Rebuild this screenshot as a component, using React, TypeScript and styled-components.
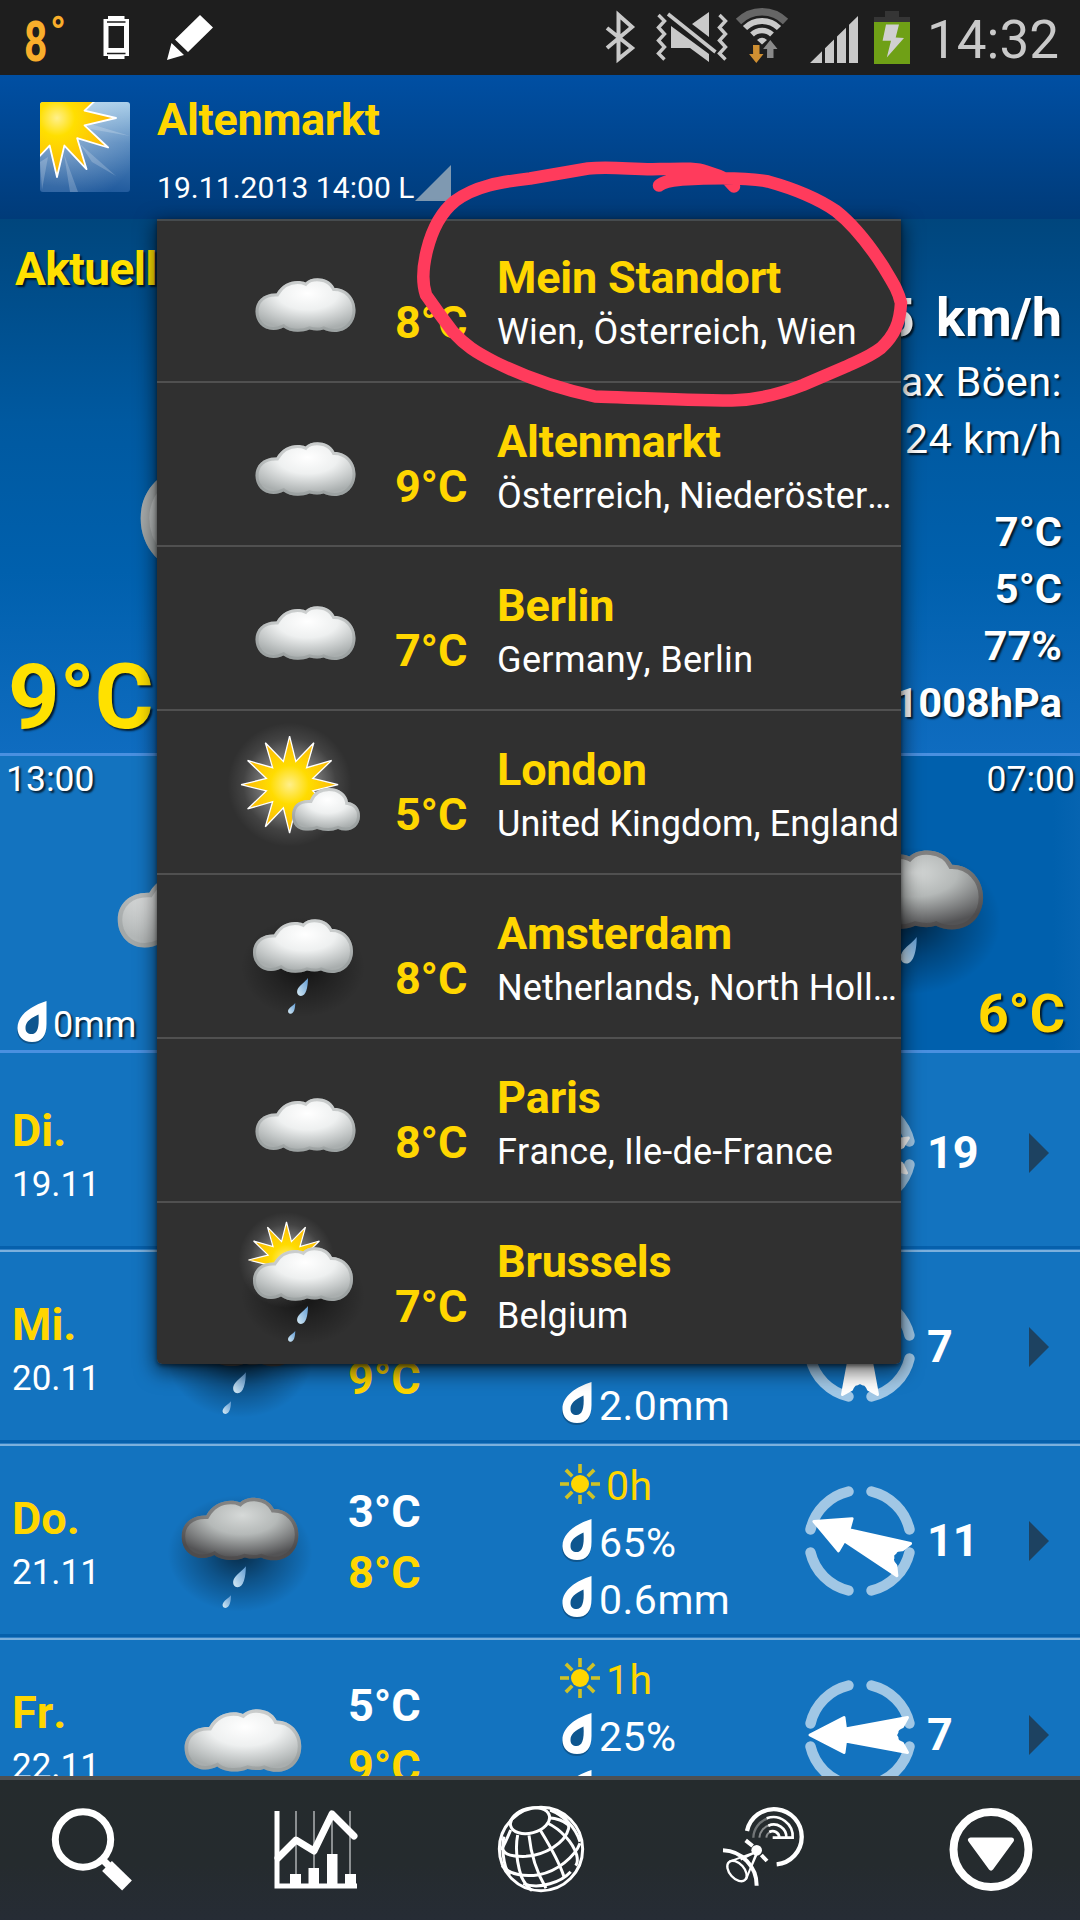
import React, { useId } from "react";
import styled, { createGlobalStyle } from "styled-components";

const YELLOW = "#ffd600";

const GlobalStyle = createGlobalStyle`
  html, body { margin: 0; padding: 0; background: #1373bf; }
  * { box-sizing: border-box; }
  body { font-family: Roboto, "Liberation Sans", sans-serif; color: #fff; font-kerning: none; }
  svg { display: block; flex: none; overflow: visible; }
`;

const Screen = styled.main`
  position: relative;
  width: 1080px;
  height: 1920px;
  overflow: hidden;
  display: flex;
  flex-direction: column;
`;

const Text = styled.div<{ $size: number; $line: number; $bold?: boolean; $color?: string; $shadow?: boolean; $track?: number }>`
  font-size: ${(p) => p.$size}px;
  line-height: ${(p) => p.$line}px;
  font-weight: ${(p) => (p.$bold ? 700 : 400)};
  color: ${(p) => p.$color ?? "#fff"};
  letter-spacing: ${(p) => p.$track ?? 0}px;
  text-shadow: ${(p) => (p.$shadow ? "2px 2px 2px rgba(0, 0, 0, 0.75)" : "none")};
  white-space: nowrap;
`;

/* ---------- status bar ---------- */

const StatusBar = styled.header`
  flex: none;
  height: 75px;
  background: #1e1e1e;
  display: flex;
  justify-content: space-between;
  padding: 0 22px 0 24px;
`;

const StatusGroup = styled.div`
  display: flex;
  align-items: flex-start;
`;

const Degrees = styled.div`
  display: flex;
  width: 76px;
  height: 75px;
  color: #f9ae2b;
  font-weight: 700;
`;

const DegreeDigit = styled.span`
  font-size: 55px;
  line-height: 84px;
  width: 25px;
  transform: scaleX(0.74);
  transform-origin: 0 0;
`;

const DegreeSign = styled.span`
  font-size: 46px;
  line-height: 66px;
  padding-left: 1px;
  transform: scaleX(0.9);
  transform-origin: 0 0;
`;

const Clock = styled(Text)`
  padding-left: 17px;
  width: 148px;
`;

const zig = (x: number) =>
  `M${x},15 l6,6 l-6,6.5 l6,6.5 l-6,6.5 l6,6.5 l-6,6.5 l6,6`;

function StatusIcons() {
  return (
    <svg width="306" height="75" viewBox="604 0 306 75" fill="none">
      <path d="M607 28 L632 48 L618.5 59 V15 L632 27 L607 48" stroke="#c9c9c9" strokeWidth="4" />
      <path d={zig(658.5)} stroke="#c9c9c9" strokeWidth="3.4" />
      <path d={zig(719.5)} stroke="#c9c9c9" strokeWidth="3.4" />
      <path d="M709 12 V37 L692 24Z M671 26 L709 54 V62 L690 48 H671Z" fill="#c9c9c9" />
      <path d="M668 14 L715.500 52" stroke="#c9c9c9" strokeWidth="3.6" />
      <path d="M738.500 21.500 A33 33 0 0 1 785.500 21.500" stroke="#666" strokeWidth="7.500" />
      <path d="M745 28 A24 24 0 0 1 779 28" stroke="#c9c9c9" strokeWidth="6" />
      <path d="M752 34.500 A14.500 14.500 0 0 1 772 34.500" stroke="#c9c9c9" strokeWidth="5.500" />
      <path d="M757 40 Q762 35.500 767 40 L762 44.500Z" fill="#c9c9c9" />
      <path d="M753 45 h6.500 v9 h4 l-7.200 9 l-7.200 -9 h4z" fill="#cf8f32" />
      <path d="M767 58 h6.500 v-9 h4 l-7.200 -9 l-7.200 9 h4z" fill="#8a8a8a" />
      <path d="M810 63 L822 51.200 V63Z M825 63 V48.300 L834 39.500 V63Z M837 63 V36.600 L846 27.800 V63Z M849 63 V24.800 L858 16 V63Z" fill="#c9c9c9" />
      <path d="M885 11 h14 v6 h11 v5 h-36 v-5 h11z" fill="#353535" />
      <path d="M874 22 h36 v42 h-36z" fill="#6fa016" />
      <path d="M886 24.500 H899 L895.700 37.500 L904 38 L886.800 57.500 L891 40.700 H882.600Z" fill="#d0d0d0" />
    </svg>
  );
}

function NoticeIcons() {
  return (
    <svg width="120" height="75" viewBox="100 0 120 75" fill="#fff">
      <path fillRule="evenodd" d="M103.500 19 h4.500 v-3 h16.500 v3 h4.500 v37 h-4.500 v3 h-16.500 v-3 h-4.500z M108.500 26 v22 h15.500 v-22z" />
      <path d="M107 22 h18.500 M107 53.500 h18.500" stroke="#1e1e1e" strokeWidth="1.500" />
      <path d="M200 15 L213 27.500 L188 52 L175 39.500Z M171.500 43 L184 55 L167 60Z" />
    </svg>
  );
}

/* ---------- weather drawings ---------- */

const CLOUD =
  "M18,52 C7,52 0,43.500 0,33.500 C0,23 8,15 21,15.500 C26,7 34,3 42,3 C45,3 48,3.500 50,4.500 C56,-1.500 73,-2 79,10 C91,10 100,20 100,32 C100,45 91,54 79,54 C75,54 71,53 68,51.500 Q62,53.500 54,51.500 C46,55 34,54.500 28,49.500 C25,51 22,52 18,52Z";
const SMALL_CLOUD =
  "M14,42.500 C5,42.500 0,36 0,27.500 C0,18 6,11.500 18,12 C22,3 29,0 37,0 C47,0 55,6 56,14 C64,15 68,21 68,28 C68,37 61,42.500 54,42.500 Q49,42.500 46,41 Q37,45 25,41 Q20,43 14,42.500Z";
const DROP = "M11,0 C11,9 9,18 4,18 C0.500,18 -1,14 1,10.500 C3,7 8,4 11,0Z";

function star(cx: number, cy: number, outer: number, inner: number) {
  return Array.from({ length: 24 }, (_, i) => {
    const r = i % 2 ? inner : outer;
    const a = (i * Math.PI) / 12;
    return `${(cx + r * Math.cos(a)).toFixed(2)},${(cy + r * Math.sin(a)).toFixed(2)}`;
  }).join(" ");
}

type Sky = "cloud" | "dimCloud" | "rain" | "darkRain" | "sunCloud" | "sunRain";

function WeatherIcon({ sky, scale = 1 }: { sky: Sky; scale?: number }) {
  const id = useId().replace(/[^a-zA-Z0-9]/g, "");
  const dark = sky === "darkRain";
  const dim = sky === "dimCloud";
  const rainy = sky === "rain" || dark || sky === "sunRain";
  const small = sky === "sunCloud";
  const path = small ? SMALL_CLOUD : CLOUD;
  const at = small ? "translate(55 77)" : rainy ? "translate(16 44)" : "translate(18.500 59)";
  const stops = dark
    ? ["#d6d9d8", "#b5b9b8", "#535355"]
    : dim
      ? ["#f2f3f3", "#dcdede", "#b4b8b8"]
      : ["#ffffff", "#eef0f0", "#a9aeae"];
  return (
    <svg width={130 * scale} height={160 * scale} viewBox="0 0 130 160">
      <defs>
        <radialGradient id={`${id}c`} cx="0.52" cy="0.28" r="0.68">
          <stop offset="0" stopColor={stops[0]} />
          <stop offset="0.45" stopColor={stops[1]} />
          <stop offset="1" stopColor={stops[2]} />
        </radialGradient>
        <radialGradient id={`${id}s`}>
          <stop offset="0" stopColor="#ffef8a" />
          <stop offset="0.4" stopColor="#ffdc00" />
          <stop offset="1" stopColor="#fbb70a" />
        </radialGradient>
        <radialGradient id={`${id}g`}>
          <stop offset="0" stopColor="#fff" stopOpacity="0.6" />
          <stop offset="0.45" stopColor="#fff" stopOpacity="0.34" />
          <stop offset="0.75" stopColor="#fff" stopOpacity="0.09" />
          <stop offset="1" stopColor="#fff" stopOpacity="0" />
        </radialGradient>
        <radialGradient id={`${id}d`}>
          <stop offset="0" stopColor="#000" stopOpacity="0.62" />
          <stop offset="0.5" stopColor="#000" stopOpacity="0.28" />
          <stop offset="1" stopColor="#000" stopOpacity="0" />
        </radialGradient>
        <linearGradient id={`${id}w`} x1="0" y1="1" x2="1" y2="0">
          <stop offset="0" stopColor="#d8ecf6" />
          <stop offset="1" stopColor="#5f9ad2" />
        </linearGradient>
        <clipPath id={`${id}p`}>
          <path d={path} />
        </clipPath>
      </defs>
      {rainy && <ellipse cx="66" cy="92" rx="62" ry="50" fill={`url(#${id}d)`} />}
      {small && (
        <>
          <circle cx="52.600" cy="73.700" r="62" fill={`url(#${id}g)`} />
          <polygon points={star(52.6, 73.7, 48.500, 24)} fill={`url(#${id}s)`} stroke="#fff" strokeWidth="1.300" />
        </>
      )}
      {sky === "sunRain" && (
        <>
          <circle cx="49.500" cy="57" r="48" fill={`url(#${id}g)`} />
          <polygon points={star(49.5, 57, 38, 19)} fill={`url(#${id}s)`} stroke="#fff" strokeWidth="1.200" />
        </>
      )}
      <g transform={at}>
        <path d={path} fill={`url(#${id}c)`} />
        <path
          d={path}
          clipPath={`url(#${id}p)`}
          fill="none"
          stroke={dark ? "#4a4646" : "#8a8e8e"}
          strokeOpacity={dark ? 0.5 : 0.38}
          strokeWidth="6"
        />
      </g>
      {rainy && (
        <>
          <path d={DROP} transform="translate(60 103)" fill={`url(#${id}w)`} />
          <path d={DROP} transform="translate(51 128) scale(0.66 0.6)" fill={`url(#${id}w)`} />
        </>
      )}
    </svg>
  );
}

function DropIcon() {
  return (
    <svg width="30" height="44" viewBox="0 0 30 44">
      <path d="M29 3 V26 C29 37 24 43 14.500 43 C6 43 0 37 0 29 Z" fill="#000" opacity="0.25" />
      <path
        fill="#fff"
        fillRule="evenodd"
        d="M29.500 0 V23 C29.500 35 24.500 41 15 41 C6 41 0.500 35 0.500 27 C0.500 14 14 5 29.500 0Z M21.500 13.500 C13 17.500 8.500 21 8.500 27 C8.500 31 11 33 14.500 33 C20 33 22.500 27 21.500 13.500Z"
      />
    </svg>
  );
}

function SunIcon() {
  return (
    <svg width="40" height="40" viewBox="-20 -20 40 40">
      <circle r="9" fill={YELLOW} />
      {Array.from({ length: 8 }, (_, i) => (
        <path key={i} d="M0 -11 V-20" transform={`rotate(${i * 45})`} stroke={YELLOW} strokeOpacity="0.8" strokeWidth="3.600" />
      ))}
    </svg>
  );
}

function WindIcon({ angle }: { angle: number }) {
  return (
    <svg width="112" height="112" viewBox="-56 -56 112 112">
      {[0, 90, 180, 270].map((a) => (
        <path
          key={a}
          d="M11.500 -49.500 A51 51 0 0 1 49.500 -11.500"
          transform={`rotate(${a})`}
          fill="none"
          stroke="#a1c7e5"
          strokeWidth="10.500"
          strokeLinecap="round"
        />
      ))}
      <path
        d="M-50,0 L-16,-17.500 L-14.500,-6 L47.500,-17.500 L42.500,-8.500 Q36.500,-6 37,-3 L35.500,0 L37,3 Q36.500,6 42.500,8.500 L47.500,17.500 L-14.500,6 L-16,17.500Z"
        transform={`rotate(${angle})`}
        fill="#fff"
        stroke="#fff"
        strokeWidth="3"
        strokeLinejoin="round"
      />
    </svg>
  );
}

/* ---------- title bar ---------- */

const TitleBar = styled.section`
  flex: none;
  height: 144px;
  display: flex;
  padding: 18px 0 0 40px;
  background: linear-gradient(#004fa3, #003b79);
`;

const TitleText = styled.div`
  padding-left: 27px;
`;

const DateLine = styled.div`
  display: flex;
  align-items: flex-start;
  margin-top: 20px;
  padding-top: 4px;
`;

const DateCorner = styled.div`
  margin: -5px 0 0 0;
`;

const AppIconSlot = styled.div`
  padding-top: 9px;
`;

function AppIcon() {
  return (
    <svg width="90" height="90" viewBox="0 0 90 90">
      <defs>
        <linearGradient id="appSky" x1="0.9" y1="0" x2="0.8" y2="1">
          <stop offset="0" stopColor="#a3cbe8" />
          <stop offset="0.45" stopColor="#5487bd" />
          <stop offset="1" stopColor="#205a9d" />
        </linearGradient>
        <radialGradient id="appHaze" cx="0.19" cy="0.18" r="1">
          <stop offset="0.3" stopColor="#fff" stopOpacity="0.3" />
          <stop offset="1" stopColor="#fff" stopOpacity="0" />
        </radialGradient>
        <radialGradient id="appSun" gradientUnits="userSpaceOnUse" cx="17" cy="16" r="60">
          <stop offset="0" stopColor="#fff08c" />
          <stop offset="0.3" stopColor="#ffdf00" />
          <stop offset="1" stopColor="#fcb30a" />
        </radialGradient>
        <clipPath id="appClip">
          <rect width="90" height="90" rx="3" />
        </clipPath>
      </defs>
      <g clipPath="url(#appClip)">
        <rect width="90" height="90" fill="url(#appSky)" />
        <rect width="90" height="90" fill="url(#appHaze)" />
        <path d="M44 20 L90 34 L50 27Z M40 42 L76 74 L52 60Z M24 52 L38 90 L30 90Z M8 55 L2 88 L0 60Z" fill="#fff" opacity="0.2" />
        <polygon points={star(17, 16, 59, 28.5)} fill="url(#appSun)" stroke="#fff" strokeWidth="1.800" strokeLinejoin="round" />
      </g>
    </svg>
  );
}

/* ---------- current conditions ---------- */

const Current = styled.section`
  flex: none;
  height: 537px;
  display: grid;
  grid-template-columns: 1fr auto;
  background: linear-gradient(#00467d, #0059a0 38%, #0060ad 66%, #0f6cc0);
  border-bottom: 3px solid #4a90e0;
`;

const CurrentLeft = styled.div`
  display: grid;
  grid-template-rows: 77px 1fr 120px;
  padding: 0 0 0 8px;
`;

const CurrentTitle = styled(Text)`
  grid-area: 1 / 1;
  padding: 23px 0 0 7px;
`;

const CurrentSky = styled.div`
  grid-area: 1 / 1 / 4 / 2;
  padding: 31px 0 0 79px;
`;

const CurrentTemp = styled(Text)`
  grid-area: 3 / 1;
  padding-top: 13px;
`;

const Readings = styled.div`
  display: flex;
  flex-direction: column;
  align-items: flex-end;
  padding: 67px 18px 0 0;
`;

const WindSpeed = styled(Text)`
  word-spacing: 8px;
`;

const ReadingGap = styled.div`
  height: 36px;
`;

/* ---------- hourly strip ---------- */

const Hourly = styled.section`
  flex: none;
  height: 297px;
  display: flex;
  justify-content: space-between;
  background: linear-gradient(90deg, #1373bf 0 50%, #0060ad 50% 97.500%, #0664b1);
  border-bottom: 3px solid #4a90e0;
`;

const HourCell = styled.div<{ $align: "left" | "right" }>`
  width: 360px;
  display: grid;
  grid-template-columns: 100%;
  grid-template-rows: 42px 1fr auto;
  text-align: ${(p) => p.$align};
  padding: ${(p) => (p.$align === "left" ? "2px 0 0 6px" : "2px 5px 0 0")};
`;

const HourSky = styled.div<{ $left: number; $top: number }>`
  grid-area: 1 / 1 / 4 / 2;
  margin: ${(p) => p.$top}px 0 0 ${(p) => p.$left}px;
  height: 0;
`;

const HourTime = styled(Text)`
  grid-area: 1 / 1;
`;

const HourRain = styled.div`
  grid-area: 3 / 1;
  display: flex;
  align-items: flex-start;
  gap: 6px;
  padding: 0 0 0 11px;
  height: 49px;
`;

const HourTemp = styled(Text)`
  grid-area: 3 / 1;
  padding: 0 10px 4px 0;
`;

/* ---------- daily forecast ---------- */

const Daily = styled.section`
  flex: none;
  height: 723px;
  padding-top: 5px;
  overflow: hidden;
  background: #1373bf;
`;

const DayRow = styled.div`
  height: 194px;
  display: flex;
  border-bottom: 2px solid #7cb0dd;
  box-shadow: inset 0 -1px #2f7fc5, inset 0 -4px #0660ac;
`;

const DayName = styled.div`
  width: 163px;
  padding: 47px 0 0 12px;
  display: flex;
  flex-direction: column;
  gap: 4px;
`;

const DaySky = styled.div`
  width: 185px;
`;

const DayTemps = styled.div`
  width: 211px;
  padding-top: 36px;
  display: flex;
  flex-direction: column;
  gap: 2px;
`;

const DayDetails = styled.div`
  width: 245px;
  padding-top: 12px;
`;

const Detail = styled.div<{ $sun?: boolean }>`
  display: flex;
  align-items: center;
  height: 57px;
  gap: ${(p) => (p.$sun ? 6 : 7)}px;
  padding-left: ${(p) => (p.$sun ? 1 : 3)}px;
`;

const DetailIcon = styled.div`
  padding-bottom: 6px;
`;

const DayWind = styled.div`
  display: flex;
  align-items: center;
  width: 225px;
  gap: 11px;
  padding-bottom: 2px;
`;

const DayChevron = styled.div`
  display: flex;
  align-items: center;
  padding-bottom: 2px;
`;

/* ---------- location menu ---------- */

const Menu = styled.nav`
  position: absolute;
  left: 157px;
  top: 219px;
  width: 744px;
  height: 1145px;
  background: #303030;
  border-radius: 0 0 5px 5px;
  overflow: hidden;
`;

const MenuShadow = styled(Menu)`
  background: none;
  overflow: visible;
  box-shadow: 0 6px 20px 2px rgba(0, 0, 0, 0.6), 0 2px 4px rgba(0, 0, 0, 0.5);
`;

const MenuRow = styled.div`
  height: 164px;
  display: flex;
  padding-left: 80px;
  border-bottom: 2px solid #505050;
  &:first-child { box-shadow: inset 0 2px #464b4e; }
  &:last-child { border-bottom: 0; }
`;

const MenuTemp = styled(Text)`
  width: 131px;
  padding: 78px 0 0 28px;
`;

const MenuPlace = styled.div`
  display: flex;
  flex-direction: column;
  gap: 7px;
  padding-top: 33px;
  margin-left: -1px;
`;

/* ---------- bottom bar ---------- */

const BottomBar = styled.footer`
  flex: none;
  height: 144px;
  display: flex;
  justify-content: space-between;
  padding: 24px 45px 0 46px;
  border-top: 4px solid #4d5052;
  background: linear-gradient(#252b2d, #252b2e 60%, #262c35);
`;

function SearchIcon() {
  return (
    <svg width="90" height="90" fill="none" stroke="#fff">
      <circle cx="37" cy="35.500" r="27.700" strokeWidth="7" />
      <path d="M56 55 L63 62" strokeWidth="7" />
      <path d="M61 62 L81 81.500" strokeWidth="14" />
    </svg>
  );
}

function ChartIcon() {
  return (
    <svg width="90" height="90" fill="none" stroke="#fff">
      <path d="M25 7 V72 M43 7 V66 M61 7 V52 M79 7 V72" stroke="#8b8f91" strokeWidth="2" />
      <path d="M6 7 V82 H86" strokeWidth="5" />
      <path d="M19 84 V70 H30 V84Z M37.500 84 V64 H48 V84Z M56 84 V50 H66.500 V84Z M74 84 V70 H85 V84Z" fill="#fff" stroke="none" />
      <path d="M7 54 L25 36 L43 47 L61 10 L83 32" strokeWidth="7" strokeLinejoin="round" strokeLinecap="round" />
    </svg>
  );
}

function GlobeIcon() {
  return (
    <svg width="90" height="90" viewBox="18 27 270 270" fill="none" stroke="#fff" strokeWidth="9">
      <circle cx="153" cy="162" r="125" strokeWidth="9" />
      <ellipse cx="120" cy="77" rx="60" ry="37" transform="rotate(-15 120 77)" />
      <path d="M176 68 C205 70 222 78 236 90 M62 105 C52 130 42 150 34 165 M83 120 C76 155 80 200 94 245 C104 266 115 278 126 287" />
      <path d="M117 121 C122 170 136 225 168 280 M151 106 C175 145 205 195 222 245 M172 84 C210 102 248 140 260 180 C264 195 262 205 257 212 M180 45 C220 60 255 95 270 140" />
      <path d="M40 165 C45 180 75 185 108 184 C165 180 225 145 236 100 C238 82 225 65 200 52" />
      <path d="M36 212 C60 240 105 246 147 239 C200 230 255 185 270 145" />
      <path d="M100 266 C150 285 215 260 242 230" />
      <path d="M42 125 C35 150 38 215 60 240" />
    </svg>
  );
}

function SatelliteIcon() {
  return (
    <svg width="90" height="90" viewBox="690 27 270 270" fill="none" stroke="#fff">
      <path d="M771 108 A83 83 0 1 1 860 208" strokeWidth="13" />
      <path d="M790 128 A62 62 0 0 1 832 71" strokeWidth="7" opacity="0.35" />
      <path d="M830 70 A58 58 0 0 1 908 128 H848 M835 92 A38 38 0 0 1 889 128 M838 111 A20 20 0 0 1 868 128" strokeWidth="8" />
      <path d="M808 128 A42 42 0 0 1 840 90 M829 128 A22 22 0 0 1 842 110" strokeWidth="6" opacity="0.45" />
      <path d="M699 166 A105 105 0 0 1 800 272" strokeWidth="12" />
      <path d="M767 136 L788 153 M814 180 L831 198" strokeWidth="12" />
      <circle cx="800" cy="166" r="16" fill="#fff" stroke="none" />
      <path d="M794 172 L718 200 M800 172 L768 254 M796 172 L752 194 M800 178 L784 215" strokeWidth="6" />
      <ellipse cx="741" cy="228" rx="22" ry="36" transform="rotate(-42 741 228)" strokeWidth="7" />
    </svg>
  );
}

function MoreIcon() {
  return (
    <svg width="90" height="90" fill="none" stroke="#fff">
      <circle cx="46" cy="45.500" r="37.500" strokeWidth="8" />
      <path d="M25.500 36 H66.500 L46 64Z" fill="#fff" strokeWidth="5" strokeLinejoin="round" />
    </svg>
  );
}

/* ---------- hand-drawn marker ---------- */

const Marker = styled.svg`
  position: absolute;
  left: 410px;
  top: 150px;
  pointer-events: none;
`;

/* ---------- data ---------- */

interface Place {
  name: string;
  region: string;
  temp: string;
  sky: Sky;
  track: number;
}

const places: Place[] = [
  { name: "Mein Standort", region: "Wien, Österreich, Wien", temp: "8°C", sky: "cloud", track: 0.15 },
  { name: "Altenmarkt", region: "Österreich, Niederöster…", temp: "9°C", sky: "cloud", track: 0.08 },
  { name: "Berlin", region: "Germany, Berlin", temp: "7°C", sky: "cloud", track: 0.36 },
  { name: "London", region: "United Kingdom, England", temp: "5°C", sky: "sunCloud", track: 0.05 },
  { name: "Amsterdam", region: "Netherlands, North Holl…", temp: "8°C", sky: "rain", track: 0.1 },
  { name: "Paris", region: "France, Ile-de-France", temp: "8°C", sky: "cloud", track: 0.2 },
  { name: "Brussels", region: "Belgium", temp: "7°C", sky: "sunRain", track: 0.1 },
];

interface Day {
  name: string;
  date: string;
  sky?: Sky;
  low?: string;
  high?: string;
  sun?: string;
  chance?: string;
  rain?: string;
  wind: string;
  angle: number;
}

const days: Day[] = [
  { name: "Di.", date: "19.11", wind: "19", angle: 3 },
  { name: "Mi.", date: "20.11", sky: "darkRain", high: "9°C", rain: "2.0mm", wind: "7", angle: 90 },
  { name: "Do.", date: "21.11", sky: "darkRain", low: "3°C", high: "8°C", sun: "0h", chance: "65%", rain: "0.6mm", wind: "11", angle: 23 },
  { name: "Fr.", date: "22.11", sky: "cloud", low: "5°C", high: "9°C", sun: "1h", chance: "25%", rain: "", wind: "7", angle: 0 },
];

function DetailLine({ value, sun }: { value?: string; sun?: boolean }) {
  return (
    <Detail $sun={sun}>
      {value !== undefined && (
        <>
          <DetailIcon>{sun ? <SunIcon /> : <DropIcon />}</DetailIcon>
          <Text $size={41} $line={57} $color={sun ? YELLOW : "#fff"} $track={0.5}>
            {value}
          </Text>
        </>
      )}
    </Detail>
  );
}

export default function App() {
  return (
    <>
      <GlobalStyle />
      <Screen>
        <StatusBar>
          <StatusGroup>
            <Degrees>
              <DegreeDigit>8</DegreeDigit>
              <DegreeSign>°</DegreeSign>
            </Degrees>
            <NoticeIcons />
          </StatusGroup>
          <StatusGroup>
            <StatusIcons />
            <Clock $size={53} $line={81} $color="#c9c9c9">
              14:32
            </Clock>
          </StatusGroup>
        </StatusBar>

        <TitleBar>
          <AppIconSlot>
            <AppIcon />
          </AppIconSlot>
          <TitleText>
            <Text $size={45} $line={53} $bold $color={YELLOW} $track={-0.3}>
              Altenmarkt
            </Text>
            <DateLine>
              <Text $size={30} $line={36} $track={0.06}>
                19.11.2013 14:00 L
              </Text>
              <DateCorner>
                <svg width="36" height="40" viewBox="0 0 36 40">
                  <path d="M36 0 V36 H0Z" fill="#7f99b1" />
                </svg>
              </DateCorner>
            </DateLine>
          </TitleText>
        </TitleBar>

        <Current>
          <CurrentLeft>
            <CurrentSky>
              <WeatherIcon sky="dimCloud" scale={2.9} />
            </CurrentSky>
            <CurrentTitle $size={46} $line={54} $bold $color="#ffe100" $shadow $track={-0.6}>
              Aktuell
            </CurrentTitle>
            <CurrentTemp $size={90} $line={104} $bold $color="#ffe100" $shadow>
              9°C
            </CurrentTemp>
          </CurrentLeft>
          <Readings>
            <WindSpeed $size={54} $line={64} $bold $shadow>5 km/h</WindSpeed>
            <Text $size={41.5} $line={64} $shadow $track={0.4}>Max Böen:</Text>
            <Text $size={41.5} $line={50} $shadow $track={0.4}>24 km/h</Text>
            <ReadingGap />
            <Text $size={41.5} $line={64} $bold $shadow>7°C</Text>
            <Text $size={41.5} $line={50} $bold $shadow>5°C</Text>
            <Text $size={41.5} $line={64} $bold $shadow>77%</Text>
            <Text $size={41.5} $line={50} $bold $shadow>1008hPa</Text>
          </Readings>
        </Current>

        <Hourly>
          <HourCell $align="left">
            <HourSky $left={84} $top={23}>
              <WeatherIcon sky="dimCloud" scale={1.5} />
            </HourSky>
            <HourTime $size={35.5} $line={42} $shadow>13:00</HourTime>
            <HourRain>
              <DropIcon />
              <Text $size={36} $line={48} $shadow>0mm</Text>
            </HourRain>
          </HourCell>
          <HourCell $align="right">
            <HourSky $left={92} $top={27}>
              <WeatherIcon sky="darkRain" scale={1.475} />
            </HourSky>
            <HourTime $size={35.5} $line={42} $shadow>07:00</HourTime>
            <HourTemp $size={54} $line={64} $bold $color={YELLOW} $shadow>6°C</HourTemp>
          </HourCell>
        </Hourly>

        <Daily>
          {days.map((d) => (
            <DayRow key={d.name}>
              <DayName>
                <Text $size={45} $line={52} $bold $color={YELLOW}>{d.name}</Text>
                <Text $size={35} $line={48}>{d.date}</Text>
              </DayName>
              <DaySky>{d.sky && <WeatherIcon sky={d.sky} scale={1.167} />}</DaySky>
              <DayTemps>
                <Text $size={45} $line={59} $bold>{d.low ?? "\u00a0"}</Text>
                <Text $size={45} $line={59} $bold $color={YELLOW}>{d.high}</Text>
              </DayTemps>
              <DayDetails>
                <DetailLine sun value={d.sun} />
                <DetailLine value={d.chance} />
                <DetailLine value={d.rain} />
              </DayDetails>
              <DayWind>
                <WindIcon angle={d.angle} />
                <Text $size={45} $line={52} $bold>{d.wind}</Text>
              </DayWind>
              <DayChevron>
                <svg width="20" height="40">
                  <path d="M0 0 L20 20 L0 40Z" fill="#1d4261" />
                </svg>
              </DayChevron>
            </DayRow>
          ))}
        </Daily>

        <BottomBar>
          <SearchIcon />
          <ChartIcon />
          <GlobeIcon />
          <SatelliteIcon />
          <MoreIcon />
        </BottomBar>

        <MenuShadow as="div" />
        <Menu>
          {places.map((p) => (
            <MenuRow key={p.name}>
              <WeatherIcon sky={p.sky} />
              <MenuTemp $size={45} $line={52} $bold $color={YELLOW} $track={-0.2}>{p.temp}</MenuTemp>
              <MenuPlace>
                <Text $size={45} $line={52} $bold $color={YELLOW} $track={-0.2}>{p.name}</Text>
                <Text $size={36} $line={42} $track={p.track}>{p.region}</Text>
              </MenuPlace>
            </MenuRow>
          ))}
        </Menu>

        <Marker width="510" height="270" viewBox="410 150 510 270" fill="none" stroke="#ff3b5c" strokeWidth="12.500" strokeLinecap="round" strokeLinejoin="round">
          <path d="M659 185.500 C664 181 672 180.500 682 179.500 C715 177.500 745 177 768 181.500 C795 189 820 200 836 211 C855 226 870 246 883.500 267 C893 283 898 290 901 303 C900 322 895 335 881 348 C868 358 855 362 845 367 L803 385 C780 394 755 400 732 400.500 C685 400 640 398 595 396.500 C560 389 525 377 495 362 C475 352 465 345 453 332 C443 319 435 308 426 295 C421 280 424 262 427 250 C432 230 440 213 455 201 C475 186 500 182 530 178.500 L588 168.500 C612 166 635 170 660 169 C685 168.500 697 168 706 171.500 C718 175 722 177 728 180 L734 186.500" />
        </Marker>
      </Screen>
    </>
  );
}
